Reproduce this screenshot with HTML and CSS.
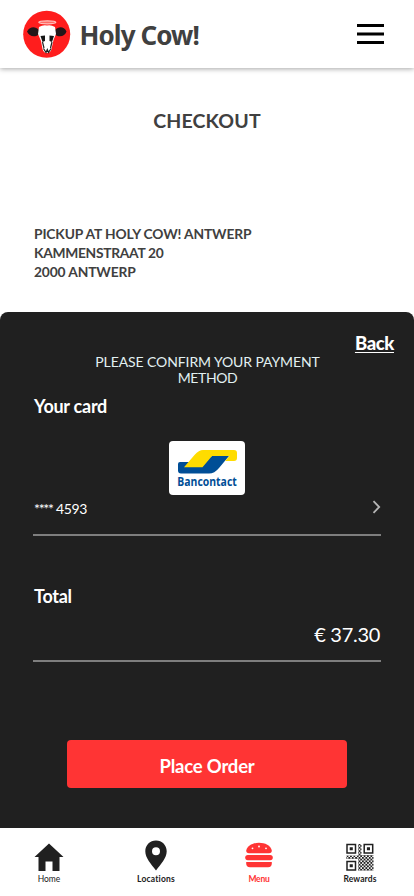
FILE: index.html
```html
<!DOCTYPE html>
<html lang="en">
<head>
<meta charset="utf-8">
<meta name="viewport" content="width=device-width, initial-scale=1">
<title>Holy Cow! Checkout</title>
<link rel="stylesheet" href="styles.css">
</head>
<body>
<header class="header">
  <svg class="logo" viewBox="0 0 48 48">
    <circle cx="23.700" cy="24.300" r="23.500" fill="#ff1d1d"/>
    <ellipse cx="24.300" cy="12.300" rx="8.500" ry="1.500" fill="#ff6a64" stroke="#ffc4c0" stroke-width="1.300"/>
    <path d="M16 20C12 16 7 16.500 4 21.500C6 26.500 12 28 16.500 24ZM32 20C36 16 41 16.500 43.500 21.500C42 26.500 36 28 31 24Z" fill="#241619"/>
    <path d="M16 17Q20 14.500 24 15.500Q28 14.500 32 17L33 24L30.500 30L28.500 39Q27.500 43 24 43Q20.500 43 19.500 39L18 31L15 24Z" fill="#fff"/>
    <path d="M17.500 26L22 25.500V31L19.500 32ZM31 26L26.500 25.500V31L29 32Z" fill="#151515"/>
    <path d="M19.500 32L21 38M29 32L27.500 38M20.500 38.500L23 42.500L24.300 39.500L25.500 42.500L28 38.500" fill="none" stroke="#222" stroke-width="1.200"/>
  </svg>
  <span class="brand">Holy Cow!</span>
  <svg class="burger" viewBox="0 0 27 20"><path d="M0 1.500H27M0 10H27M0 18.500H27" stroke="#000" stroke-width="3"/></svg>
</header>
<main>
  <h1 class="title">CHECKOUT</h1>
  <address class="address">
    <div class="venue">PICKUP AT HOLY COW! ANTWERP</div>
    <div class="street">KAMMENSTRAAT 20</div>
    <div class="city">2000 ANTWERP</div>
  </address>
  <section class="panel">
    <a class="back">Back</a>
    <p class="confirm">PLEASE CONFIRM YOUR PAYMENT<br><span class="method">METHOD</span></p>
    <h2 class="label">Your card</h2>
    <svg class="bancontact" viewBox="0 0 76 54">
      <rect width="76" height="54" rx="4" fill="#fff"/>
      <path d="M9 23Q9 21 11 21H33L43 15H60L50 27Q45.500 32.500 40 32.500H12Q9 32.500 9 29.500Z" fill="#004e96"/>
      <path d="M15 26.200L25.500 14Q30 9 34 9H65Q68 9 68 12V17Q68 20 65 20H56L60.500 15H43L33.500 26.200Z" fill="#ffdc00"/>
      <text class="bank" x="8.300" y="45" textLength="59.500" lengthAdjust="spacingAndGlyphs">Bancontact</text>
    </svg>
    <div class="card-row">
      <span class="digits"><span class="mask">****</span> 4593</span>
      <svg class="chevron" viewBox="0 0 9 14"><path d="M1.500 1.200L7.200 7L1.500 12.800" fill="none" stroke="#b5b5b5" stroke-width="1.800"/></svg>
    </div>
    <h2 class="label total">Total</h2>
    <div class="sum">€ 37.30</div>
    <button class="order">Place Order</button>
  </section>
</main>
<nav class="nav">
  <a class="item home">
    <svg viewBox="0 0 30 32"><path d="M15 3.500L29.500 17H25.500V31H18.500V21.500H11.500V31H4.500V17H.5Z" fill="#202020"/></svg>
    <span>Home</span>
  </a>
  <a class="item locations">
    <svg viewBox="0 0 30 32"><path fill-rule="evenodd" d="M15 .6C9 .6 4.300 5.300 4.300 11.300C4.300 18 10 24 15 30.500C20 24 25.700 18 25.700 11.300C25.700 5.300 21 .6 15 .6ZM15 7.300A4 4 0 1 1 15 15.300A4 4 0 1 1 15 7.300Z" fill="#202020"/></svg>
    <span>Locations</span>
  </a>
  <a class="item menu">
    <svg viewBox="0 0 30 32"><g fill="#ff3434"><path d="M2.200 10.500C3.200 5.500 9 2.800 15 2.800S26.800 5.500 27.800 10.500Q28 13.300 25 13.300H5Q2 13.300 2.200 10.500Z"/><rect x="1.200" y="15" width="27.600" height="5.200" rx="2.600"/><path d="M2.200 22H27.800V23.500Q27.800 27.200 24 27.200H6Q2.200 27.200 2.200 23.500Z"/></g><g fill="#fff"><circle cx="8.500" cy="8.300" r=".9"/><circle cx="15" cy="6.500" r=".9"/><circle cx="22" cy="8.300" r=".9"/></g></svg>
    <span>Menu</span>
  </a>
  <a class="item rewards">
    <svg viewBox="0 0 30 32">
      <defs><pattern id="modules" width="3.400" height="3.400" patternUnits="userSpaceOnUse"><path d="M0 0H1.900V1.900H0ZM1.700 1.700H3.400V3.400H1.700Z" fill="#202020"/></pattern></defs>
      <g fill="none" stroke="#202020" stroke-width="1.500"><path d="M2 4.500H10.500V13H2ZM19.200 4.500H27.700V13H19.200ZM2 21.500H10.500V30H2Z"/></g>
      <path d="M4.700 7.200H7.800V10.300H4.700ZM21.900 7.200H25V10.300H21.900ZM4.700 24.200H7.800V27.300H4.700Z" fill="#202020"/>
      <path d="M13 4H16.500V15H28.500V30.800H13V19H1.300V15.500H13Z" fill="url(#modules)"/>
    </svg>
    <span>Rewards</span>
  </a>
</nav>
</body>
</html>
```
FILE: styles.css
```css
* { box-sizing: border-box; }
body { margin: 0; width: 414px; height: 896px; overflow: hidden; display: flex; flex-direction: column; background: #fff; color: #404040; font-family: Lato, "Liberation Sans", sans-serif; }
svg { display: block; flex: none; }
.header { height: 68px; flex: none; display: flex; align-items: center; padding: 0 30px 0 23px; box-shadow: 0 1px 5px rgba(0,0,0,.35); }
.logo { width: 48px; height: 48px; }
.brand { margin: 1px 0 0 8.500px; font: 700 26px/34px "Noto Sans", sans-serif; letter-spacing: -.9px; white-space: nowrap; }
.burger { width: 27px; height: 20px; margin-left: auto; }
main { flex: 1; display: flex; flex-direction: column; min-height: 0; }
.title { margin: 41px 0 0; text-align: center; font-size: 19.500px; line-height: 24px; font-weight: 700; letter-spacing: .15px; }
.address { margin: 91px 0 0 34px; font-style: normal; font-weight: 700; font-size: 13.800px; line-height: 19px; white-space: nowrap; letter-spacing: -.14px; }
.street { letter-spacing: -.29px; }
.panel { margin-top: 31px; flex: 1; background: #202020; border-radius: 8px 8px 0 0; color: #fff; padding: 19px 33px 0; display: flex; flex-direction: column; }
.back { align-self: flex-end; margin-right: -13px; font-size: 18.500px; line-height: 24px; font-weight: 900; letter-spacing: -.4px; text-decoration: underline; text-underline-offset: 2px; text-decoration-thickness: 1px; }
.confirm { margin: -1px 0 0 1px; text-align: center; color: #e2f1f2; font-size: 14px; line-height: 16px; letter-spacing: -.1px; }
.method { letter-spacing: -.4px; }
.label { margin: 8px 0 0 1px; font-size: 18px; line-height: 24px; font-weight: 700; letter-spacing: -.25px; }
.bancontact { width: 76px; height: 54px; margin: 23px auto 0; }
.bank { font: 700 11.500px "Open Sans", sans-serif; fill: #004e96; }
.card-row { height: 41px; border-bottom: 2px solid #7e7e7e; display: flex; justify-content: space-between; align-items: flex-start; padding: 4px 0 0 1px; font-size: 14px; line-height: 20px; }
.digits { letter-spacing: -.3px; }
.mask { letter-spacing: -1.3px; }
.chevron { width: 9px; height: 14px; margin-top: 1px; }
.total { margin-top: 48px; }
.sum { height: 54px; padding: 14px 1px 0 0; border-bottom: 2px solid #7e7e7e; text-align: right; font-size: 20px; line-height: 24px; letter-spacing: -.3px; }
.order { width: 280px; height: 48px; margin: 78px 0 0 34px; padding: 3px 0 0; border: 0; border-radius: 4px; background: #ff3434; color: #fff; font: 700 18.500px/24px Lato, sans-serif; letter-spacing: -.2px; }
.nav { height: 68px; flex: none; display: grid; grid-template-columns: 98px 116px 90px 112px; padding-top: 12px; }
.item { display: flex; flex-direction: column; align-items: center; color: #202020; font-size: 8.500px; line-height: 10px; font-weight: 700; }
.item svg { width: 30px; height: 32px; }
.item span { margin-top: 2px; white-space: nowrap; }
.home { font-weight: 400; }
.locations { letter-spacing: .2px; }
.menu { color: #ff3434; letter-spacing: -.2px; }
.rewards { letter-spacing: .1px; }
```
